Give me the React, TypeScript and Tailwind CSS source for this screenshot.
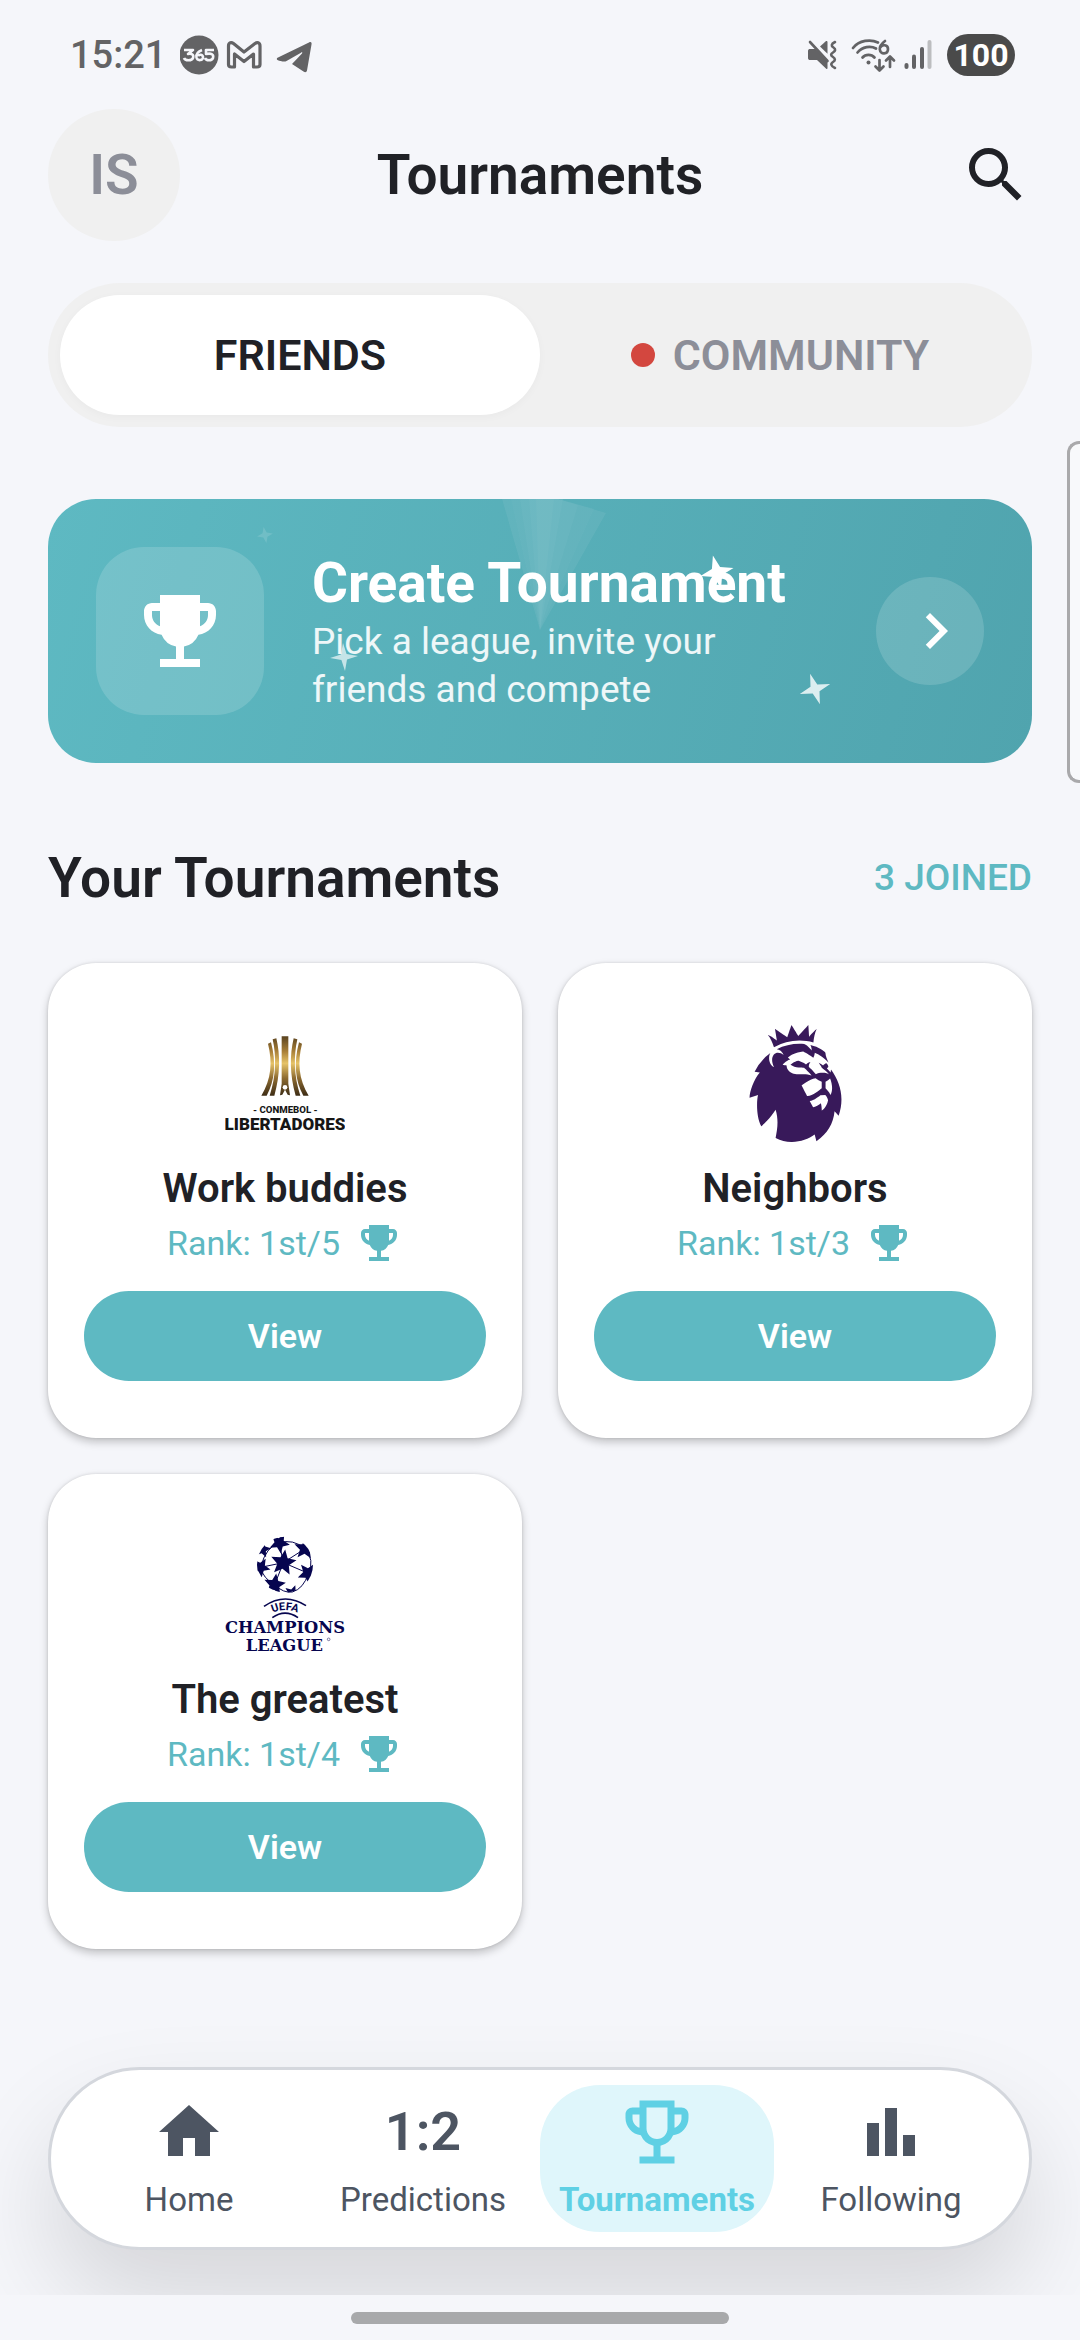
import { MdBarChart, MdChevronRight, MdEmojiEvents, MdHome, MdOutlineEmojiEvents, MdSearch } from "react-icons/md";
import { SiPremierleague } from "react-icons/si";
import type { ReactNode } from "react";

function starPoints(cx: number, cy: number, outer: number, inner: number, tips: number, turn: number) {
  const points: string[] = [];
  for (let i = 0; i < tips * 2; i++) {
    const r = i % 2 === 0 ? outer : inner;
    const a = ((turn - 90 + (i * 180) / tips) * Math.PI) / 180;
    points.push(`${(cx + r * Math.cos(a)).toFixed(1)},${(cy + r * Math.sin(a)).toFixed(1)}`);
  }
  return points.join(" ");
}

function StatusBar() {
  return (
    <div className="flex h-[109px] items-start justify-between pt-[34px] pr-[65px] pl-[70px]">
      <div className="flex h-[42px] items-center text-[#636365]">
        <span className="w-[110px] text-[38px] leading-[42px] font-medium">15:21</span>
        <svg className="h-[42px] w-[134px]" viewBox="0 0 134 42" fill="none">
          <circle cx="19" cy="21" r="19.5" fill="#636365" />
          <g stroke="#f5f6fa" strokeWidth="2.600" strokeLinejoin="round">
            <path d="M4 16h9l-5 4c4-1 6 1 5 4-1 3-8 3-9 0" />
            <path d="M22 16c-5 2-6 5-5.500 7.500 1 4 7 3 6.500-.5-.5-3-4-2.500-5-1" />
            <path d="M34 16h-8v4c5-1 8 0 7 4-1 3-7 3-8 0" />
          </g>
          <path
            d="M51.500 33c-2 0-3-1-3-2.500V12c0-4 3-4 5-2.500L64 18l11-8.500c2-1.500 5-1.500 5 2.500v18.500c0 1.500-1 2.500-3 2.500h-3.500V20L64 27.500 54.500 20v13z"
            stroke="#636365"
            strokeWidth="3.200"
            strokeLinejoin="round"
          />
          <path d="M129 8.500c2-1 3 0 2.500 2l-4.500 26c-.5 2-2 2-3.500 1l-11.500-7.500 10-10.500c.8-1-.2-1.500-1-.8L106.500 27c-1.500 1-6 .5-9-1-1-.5-1-2 .5-2.600z" fill="#636365" />
        </svg>
      </div>
      <div className="flex h-[42px] items-center">
        <svg className="mr-[14px] h-[42px] w-[126px]" viewBox="0 0 126 42" fill="none" strokeLinecap="round" strokeLinejoin="round">
          <path d="M1 17c0-1.500 1-2 2-2h5.500l12 12.500V34c0 1-.5 1.300-1.300.7L10 26H3c-1 0-2-.5-2-2z" fill="#636365" />
          <path d="M13 12.500l5.500-5c1-.8 2-.3 2 .8v11.500z" fill="#636365" />
          <path d="M3 8l17.500 19" stroke="#636365" strokeWidth="2.600" />
          <path d="M28 8c-4 2-4 4-1.500 5.500s2 3.500-.5 5-2.500 3 0 4.500 2.500 3.500 0 5-2.500 4 2 6" stroke="#636365" strokeWidth="2.600" />
          <g stroke="#636365" strokeWidth="2.700">
            <path d="M46 14c6-8 18-9 25-5.500" />
            <path d="M50.500 18.500c5-6 13-7 18.500-4" />
            <path d="M55.500 23.500c3-3.500 9-3.500 12 0" />
            <path d="M78 7c-4 3-5.500 6-5.200 8.500.5 5.500 8.200 5 8.200-.5 0-4.500-6-5-7.700-1.500" />
            <path d="M72.500 26v10m-4-3.500 4 4 4-4M83 33V23m-4 3.500 4-4 4 4" />
          </g>
          <circle cx="61.500" cy="28.500" r="2" fill="#636365" />
          <g strokeWidth="4">
            <path d="M99.500 31v2" stroke="#636365" />
            <path d="M107 22.500V33" stroke="#636365" />
            <path d="M115 15v18" stroke="#636365" />
            <path d="M122.500 8v25" stroke="#bcbdbf" />
          </g>
        </svg>
        <span className="flex h-[42px] w-[68px] items-center justify-center rounded-full bg-[#4a4a4a] text-[32px] leading-none font-bold text-white">100</span>
      </div>
    </div>
  );
}

function Header() {
  return (
    <header className="flex items-center justify-between px-12">
      <button className="flex size-[132px] items-center justify-center rounded-full bg-[#f0f0f0] text-[55px] font-semibold text-[#8c8e98]">IS</button>
      <h1 className="text-[55px] leading-[72px] font-semibold">Tournaments</h1>
      <button aria-label="Search" className="flex w-[132px] justify-end">
        <MdSearch className="size-[72px]" />
      </button>
    </header>
  );
}

function Tabs() {
  return (
    <div role="tablist" className="mx-12 mt-[42px] flex rounded-full bg-[#f0f0f0] p-3 text-[43px] leading-[48px] font-semibold">
      <button role="tab" aria-selected="true" className="h-[120px] flex-1 rounded-full bg-white shadow-[0_2px_8px_rgba(0,0,0,0.03)]">
        FRIENDS
      </button>
      <button role="tab" aria-selected="false" className="flex h-[120px] flex-1 items-center justify-center gap-[18px] text-[#8c8e98]">
        <span className="size-6 rounded-full bg-[#d3473f]" />
        COMMUNITY
      </button>
    </div>
  );
}

function BannerSparkles() {
  return (
    <svg className="pointer-events-none absolute inset-0 size-full" viewBox="0 0 984 264" preserveAspectRatio="xMidYMid slice" fill="#fff">
      <g opacity="0.045">
        <path d="M454 0h56l48 14L492 131z" />
        <path d="M463 0h47l36 10L492 131z" />
        <path d="M472 0h38l20 6L492 131z" />
        <path d="M481 0h34L492 131z" />
        <path d="M488 0h18L492 131z" />
      </g>
      <g>
        <path d="M454 0h56l48 14L492 131z" opacity="0.025" />
        <path d="M463 0h47l36 10L492 131z" opacity="0.025" />
        <path d="M472 0h38l20 6L492 131z" opacity="0.03" />
        <path d="M481 0h34L492 131z" opacity="0.03" />
        <path d="M488 0h18L492 131z" opacity="0.03" />
      </g>
      <polygon points={starPoints(217, 36, 8, 3, 4, -10)} opacity="0.13" />
      <polygon points={starPoints(296, 158, 14, 4, 4, -4)} opacity="0.65" />
      <polygon points={starPoints(767, 190, 16, 5, 4, -18)} opacity="0.8" />
      <polygon points={starPoints(669, 73, 17, 6, 4, -14)} />
    </svg>
  );
}

function CreateBanner() {
  return (
    <button className="relative mx-12 mt-[72px] flex items-center overflow-hidden rounded-[48px] bg-linear-[105deg] from-[#5eb9c2] to-[#50a4ae] p-12 text-left text-white">
      <span className="flex size-[168px] items-center justify-center rounded-[48px] bg-white/15">
        <MdEmojiEvents className="size-24" />
      </span>
      <span className="ml-12 flex-1">
        <span className="block text-[55px] leading-[70px] font-bold">Create Tournament</span>
        <span className="block text-[37px] leading-[48px] text-white/90">
          Pick a league, invite your
          <br />
          friends and compete
        </span>
      </span>
      <span className="flex size-[108px] items-center justify-center rounded-full bg-white/15 pl-3">
        <MdChevronRight className="size-[72px]" />
      </span>
      <BannerSparkles />
    </button>
  );
}

function LibertadoresLogo() {
  return (
    <svg className="size-[120px]" viewBox="0 0 360 360" role="img" aria-label="Conmebol Libertadores">
      <defs>
        <linearGradient id="gold" gradientUnits="userSpaceOnUse" x1="0" x2="0" y1="40" y2="220">
          <stop offset="0" stopColor="#5a4320" />
          <stop offset="0.25" stopColor="#a87f37" />
          <stop offset="0.45" stopColor="#e6c368" />
          <stop offset="0.7" stopColor="#8c6a30" />
          <stop offset="1" stopColor="#3a2a14" />
        </linearGradient>
      </defs>
      <g fill="url(#gold)">
        <path d="M170 40h20v142l5 35-7-2-8-15-8 15-7 2 5-35z" />
        <path d="M143 49l11-3c12 50 12 110-6 172h-14c20-60 20-120 9-169z" />
        <path d="M217 49l-11-3c-12 50-12 110 6 172h14c-20-60-20-120-9-169z" />
        <path d="M129 62l9-4c16 60 12 115-13 160h-16c30-50 34-100 20-156z" />
        <path d="M231 62l-9-4c-16 60-12 115 13 160h16c-30-50-34-100-20-156z" />
      </g>
      <circle cx="180" cy="193" r="7" fill="#fff" />
      <g fill="#161616" textAnchor="middle" fontFamily="Roboto, sans-serif">
        <text x="181" y="271" fontSize="29" fontWeight="800">- CONMEBOL -</text>
        <text x="180" y="320" fontSize="51" fontWeight="900">LIBERTADORES</text>
      </g>
    </svg>
  );
}

function PremierLogo() {
  return (
    <span className="flex size-[120px] items-center justify-center">
      <SiPremierleague className="size-[117px] text-[#38195a]" role="img" aria-label="Premier League" />
    </span>
  );
}

function ChampionsLogo() {
  const stars = [
    [175, 86, 40, 8],
    [163, 27, 32, 28],
    [240, 44, 34, 5],
    [250, 118, 34, 32],
    [149, 152, 34, 8],
    [107, 100, 30, 30],
    [112, 46, 26, 10],
    [202, 178, 26, 20],
  ];
  return (
    <svg className="size-[120px]" viewBox="0 0 360 360" role="img" aria-label="UEFA Champions League" fill="#06054f">
      <defs>
        <clipPath id="ball">
          <circle cx="180" cy="92" r="84" />
        </clipPath>
        <path id="uefa-arc" d="M122 248Q180 208 238 248" />
      </defs>
      <g clipPath="url(#ball)">
        {stars.map(([x, y, r, turn]) => (
          <polygon key={`${x}-${y}`} points={starPoints(x, y, r, r * 0.46, 5, turn)} />
        ))}
      </g>
      <g fill="none" stroke="#06054f" strokeWidth="3">
        <path d="M163 27q-40 10-56 73M163 27q40-14 77 17M240 44q30 34 10 74M250 118q-14 46-48 56M149 152q26 26 53 22M107 100q6 32 42 52M175 86l-68 14M175 86l65-42M175 86l75 32M175 86l-26 66M175 86l-12-59" />
      </g>
      <g fill="none" stroke="#06054f" strokeWidth="5">
        <path d="M117 217Q180 174 243 215" />
        <path d="M142 251Q180 224 219 251" />
      </g>
      <text fontFamily="Roboto, sans-serif" fontSize="33" fontWeight="700" textAnchor="middle">
        <textPath href="#uefa-arc" startOffset="50%">UEFA</textPath>
      </text>
      <g fontFamily="'DejaVu Serif', serif" fontWeight="700" textAnchor="middle">
        <text x="180" y="296" fontSize="49">CHAMPIONS</text>
        <text x="178" y="350" fontSize="49">LEAGUE</text>
      </g>
      <circle cx="311" cy="316" r="4" fill="none" stroke="#06054f" strokeWidth="1.500" />
    </svg>
  );
}

function TournamentCard({ logo, name, rank }: { logo: ReactNode; name: string; rank: string }) {
  return (
    <article className="flex flex-col items-center rounded-[48px] bg-white px-9 pt-[60px] pb-[57px] shadow-[0_4px_8px_rgba(0,0,0,0.22),0_0_3px_rgba(0,0,0,0.12)]">
      {logo}
      <h3 className="mt-[22px] text-[40px] leading-[48px] font-semibold">{name}</h3>
      <p className="mt-[6px] flex items-center gap-[15px] text-[34px] leading-[48px] text-[#5eb9c2]">
        Rank: {rank}
        <MdEmojiEvents className="size-12" />
      </p>
      <button className="mt-[24px] h-[90px] w-full rounded-full bg-[#5eb9c2] text-[34px] font-semibold text-white">View</button>
    </article>
  );
}

function NavItem({ icon, label, active }: { icon: ReactNode; label: string; active?: boolean }) {
  return (
    <a
      href="#"
      aria-current={active ? "page" : undefined}
      className={
        active
          ? "flex h-[147px] flex-1 flex-col items-center rounded-[60px] bg-[#dff6fb] text-[#5fd0e4]"
          : "flex h-[147px] flex-1 flex-col items-center text-[#4d5562]"
      }
    >
      <span className="flex h-[94px] items-center">{icon}</span>
      <span className={active ? "text-[33px] leading-[42px] font-bold" : "text-[33px] leading-[42px]"}>{label}</span>
    </a>
  );
}

function BottomNav() {
  return (
    <div className="mt-auto overflow-hidden px-12 pt-20 pb-[45px]">
      <nav className="flex items-center rounded-full border-3 border-[#d4d7dd] bg-white px-[21px] py-[15px] shadow-[0_50px_100px_rgba(0,0,0,0.13)]">
        <NavItem icon={<MdHome className="size-[72px]" />} label="Home" />
        <NavItem icon={<span className="text-[54px] leading-[72px] font-semibold">1:2</span>} label="Predictions" />
        <NavItem icon={<MdOutlineEmojiEvents className="size-[84px]" />} label="Tournaments" active />
        <NavItem icon={<MdBarChart className="size-[72px]" />} label="Following" />
      </nav>
    </div>
  );
}

export default function App() {
  return (
    <div className="relative flex min-h-screen flex-col overflow-hidden bg-[#f5f6fa] font-['Roboto',sans-serif] text-[#202126]">
      <StatusBar />
      <Header />
      <main className="flex flex-col">
        <Tabs />
        <CreateBanner />
        <section className="mx-12 mt-[79px]">
          <div className="flex items-center justify-between">
            <h2 className="text-[55px] leading-[72px] font-semibold">Your Tournaments</h2>
            <span className="text-[37px] leading-[48px] font-medium text-[#5eb9c2]">3 JOINED</span>
          </div>
          <div className="mt-[49px] grid grid-cols-2 gap-9">
            <TournamentCard logo={<LibertadoresLogo />} name="Work buddies" rank="1st/5" />
            <TournamentCard logo={<PremierLogo />} name="Neighbors" rank="1st/3" />
            <TournamentCard logo={<ChampionsLogo />} name="The greatest" rank="1st/4" />
          </div>
        </section>
      </main>
      <BottomNav />
      <div className="flex h-[45px] justify-center bg-[#f5f6fa] pt-[17px]">
        <span className="h-3 w-[378px] rounded-full bg-[#a8a9ab]" />
      </div>
      <div className="absolute top-[441px] right-0 h-[342px] w-[13px] rounded-l-[12px] border-3 border-r-0 border-[#a9a9ab] bg-[#f8f9fb]" />
    </div>
  );
}
